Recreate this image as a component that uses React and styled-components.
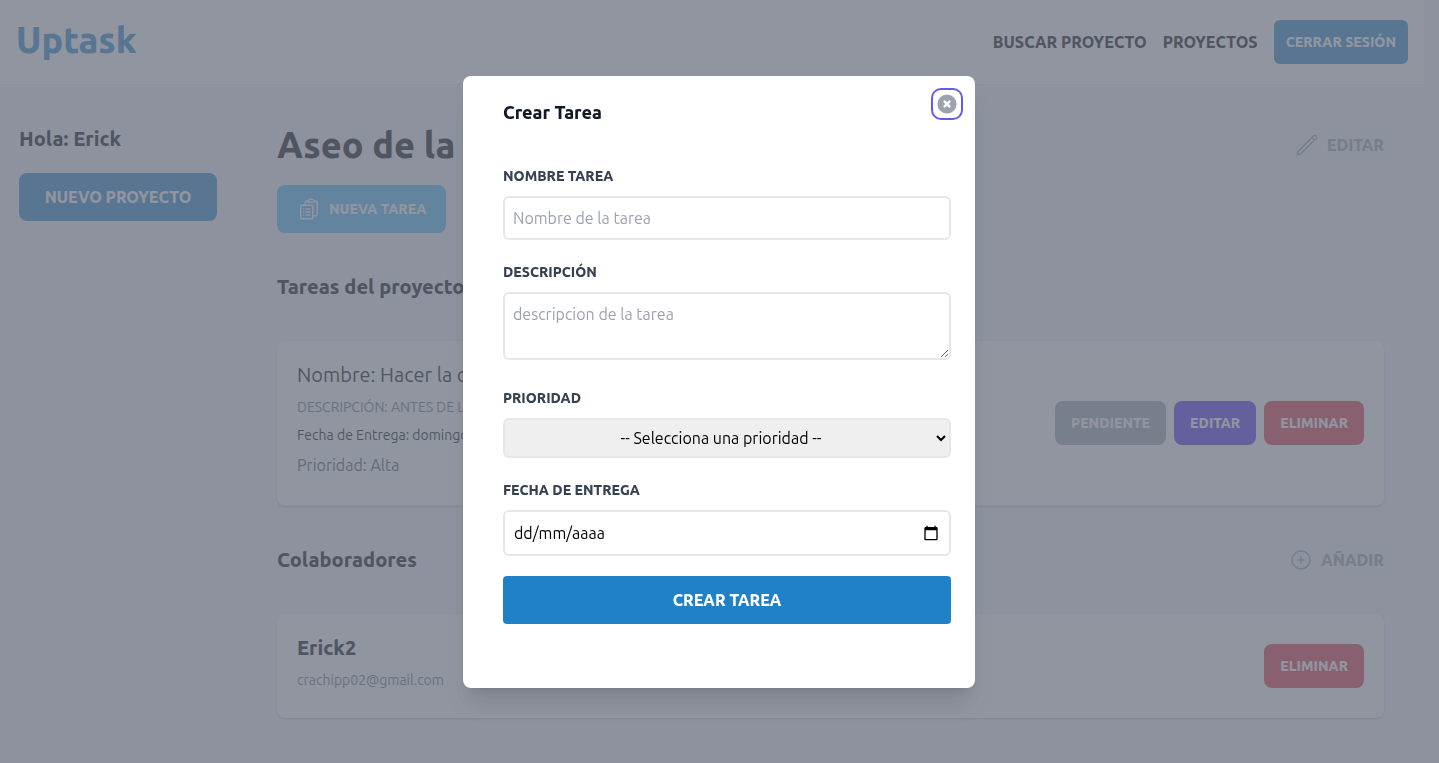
import React from "react";
import styled, { createGlobalStyle } from "styled-components";

const font = 'Ubuntu, "Noto Sans", "Open Sans", sans-serif';
const bold = 800;

const GlobalStyle = createGlobalStyle`
  *, *::before, *::after { box-sizing: border-box; }
  body {
    margin: 0;
    padding-right: 15px;
    background: #f3f4f6;
    color: #000;
    font-family: ${font};
    font-size: 16px;
    line-height: 24px;
  }
  h1, h2, p { margin: 0; }
  button, input, select, textarea { font-family: inherit; }
  a { color: inherit; text-decoration: none; }
`;

const Header = styled.header`
  display: flex;
  align-items: center;
  justify-content: space-between;
  padding: 20px 16px;
  background: #fff;
  border-bottom: 1px solid #e5e7eb;
`;

const Logo = styled.p`
  height: 44px;
  color: #2081c8;
  font-size: 36px;
  font-weight: ${bold};
  line-height: 40px;
`;

const Nav = styled.nav`
  display: flex;
  align-items: center;
  gap: 16px;
`;

const NavItem = styled.a`
  font-weight: ${bold};
  text-transform: uppercase;
`;

const NavButton = styled.button`
  padding: 0;
  border: 0;
  background: none;
  font-size: 16px;
  font-weight: ${bold};
  line-height: 24px;
  text-transform: uppercase;
  cursor: pointer;
`;

const tones = {
  primary: "#2081c8",
  sky: "#48baf6",
  gray: "#9ca3af",
  indigo: "#4f2ef4",
  red: "#e02f3f",
};

const Button = styled.button`
  display: flex;
  align-items: center;
  gap: 8px;
  padding: ${({ $padding }) => $padding || "12px 16px"};
  border: 0;
  border-radius: ${({ $radius }) => $radius || 8}px;
  background: ${({ $tone }) => tones[$tone]};
  color: #fff;
  font-size: 14px;
  font-weight: ${bold};
  line-height: 20px;
  text-transform: uppercase;
  cursor: pointer;
`;

const Layout = styled.div`
  display: flex;
`;

const Sidebar = styled.aside`
  flex: 0 0 237px;
  padding: 40px 20px 40px 19px;
`;

const Heading = styled.h2`
  font-size: 20px;
  font-weight: ${bold};
  line-height: 28px;
`;

const NewProject = styled.a`
  display: block;
  margin-top: 20px;
  padding: 12px;
  border-radius: 8px;
  background: #2081c8;
  color: #fff;
  font-weight: ${bold};
  text-align: center;
  text-transform: uppercase;
`;

const Main = styled.main`
  flex: 1;
  min-width: 0;
  padding: 40px;
`;

const SectionRow = styled.div`
  display: flex;
  align-items: center;
  justify-content: space-between;
`;

const TitleRow = styled(SectionRow)`
  margin-bottom: 20px;
`;

const Section = styled.section`
  display: grid;
  gap: 40px;
  margin-top: 40px;
`;

const Title = styled.h1`
  font-size: 36px;
  font-weight: ${bold};
  line-height: 40px;
`;

const IconLink = styled.a`
  display: flex;
  align-items: center;
  gap: 8px;
  color: #9ca3af;
  font-weight: ${bold};
  text-transform: uppercase;
`;

const Card = styled.article`
  display: flex;
  align-items: center;
  justify-content: space-between;
  padding: 20px;
  border-radius: 8px;
  background: #fff;
  box-shadow: 0 1px 3px rgba(0, 0, 0, 0.1), 0 1px 2px rgba(0, 0, 0, 0.1);
`;

const TaskCard = styled(Card)`
  border-bottom: 1px solid #e5e7eb;
`;

const CardText = styled.div`
  display: grid;
  gap: 8px;
  padding-bottom: 8px;
`;

const CardName = styled.p`
  font-size: 20px;
  font-weight: ${({ $bold }) => ($bold ? bold : 400)};
  line-height: 28px;
`;

const Small = styled.p`
  color: ${({ $muted }) => ($muted ? "#6b7280" : "#000")};
  font-size: 14px;
  line-height: 20px;
  text-transform: ${({ $upper }) => ($upper ? "uppercase" : "none")};
`;

const Priority = styled.p`
  color: #4b5563;
`;

const Actions = styled.div`
  display: flex;
  gap: 8px;
`;

const Overlay = styled.div`
  position: fixed;
  inset: 0;
  display: flex;
  align-items: center;
  justify-content: center;
  padding-right: 1px;
  background: rgba(107, 114, 128, 0.75);
`;

const Dialog = styled.div`
  position: relative;
  width: 100%;
  max-width: 512px;
  padding: 24px 24px 24px 40px;
  border-radius: 8px;
  background: #fff;
  box-shadow: 0 20px 25px -5px rgba(0, 0, 0, 0.1), 0 8px 10px -6px rgba(0, 0, 0, 0.1);
`;

const CloseButton = styled.button`
  position: absolute;
  top: 16px;
  right: 16px;
  display: flex;
  padding: 0;
  border: 0;
  border-radius: 6px;
  background: #fff;
  color: #9ca3af;
  box-shadow: 0 0 0 2px #fff, 0 0 0 4px #635bea;
  cursor: pointer;
`;

const DialogTitle = styled.h2`
  color: #111827;
  font-size: 18px;
  font-weight: ${bold};
  line-height: 24px;
`;

const Form = styled.form`
  display: grid;
  gap: 20px;
  margin: 40px 0;
`;

const Field = styled.div`
  display: grid;
  gap: 8px;
  padding-bottom: ${({ $extra }) => ($extra ? 6 : 0)}px;
`;

const Label = styled.label`
  color: #374151;
  font-size: 14px;
  font-weight: ${bold};
  text-transform: uppercase;
`;

const Input = styled.input`
  display: block;
  width: 100%;
  height: 44px;
  padding: 8px;
  border: 2px solid #e5e7eb;
  border-radius: 6px;
  background: #fff;
  color: #000;
  font-size: 16px;
  line-height: 24px;
  &::placeholder { color: #9ca3af; }
`;

const DateBox = styled.div`
  position: relative;
`;

const DateIcon = styled.svg`
  position: absolute;
  top: 15px;
  right: 12px;
  pointer-events: none;
`;

const DateInput = styled(Input)`
  height: 46px;
  padding: 8px 40px 8px 9px;
  &::placeholder { color: #000; }
`;

const Textarea = styled.textarea`
  display: block;
  width: 100%;
  height: 68px;
  padding: 8px;
  border: 2px solid #e5e7eb;
  border-radius: 6px;
  background: #fff;
  font-size: 16px;
  line-height: 24px;
  resize: vertical;
  &::placeholder { color: #9ca3af; }
`;

const Select = styled.select`
  width: 100%;
  height: 40px;
  padding: 0;
  border: 2px solid #e5e7eb;
  border-radius: 6px;
  background: #efefef;
  color: #000;
  font-size: 16px;
  text-align: center;
`;

const Submit = styled.button`
  height: 48px;
  border: 0;
  border-radius: 4px;
  background: #2081c8;
  color: #fff;
  font-size: 16px;
  font-weight: ${bold};
  text-transform: uppercase;
  cursor: pointer;
`;

const ClipboardIcon = () => (
  <svg width="24" height="24" viewBox="0 0 24 24" fill="none" stroke="currentColor" strokeWidth="1.5" strokeLinecap="round" strokeLinejoin="round" aria-hidden="true">
    <path d="M9 12h3.75M9 15h3.75M9 18h3.75m3 .75H18a2.25 2.25 0 002.25-2.25V6.108c0-1.135-.845-2.098-1.976-2.192a48.424 48.424 0 00-1.123-.08m-5.801 0c-.065.21-.1.433-.1.664 0 .414.336.75.75.75h4.5a.75.75 0 00.75-.75 2.25 2.25 0 00-.1-.664m-5.8 0A2.251 2.251 0 0113.5 2.25H15c1.012 0 1.867.668 2.15 1.586m-5.8 0c-.376.023-.75.05-1.124.08C9.095 4.01 8.25 4.973 8.25 6.108V8.25m0 0H4.875c-.621 0-1.125.504-1.125 1.125v11.25c0 .621.504 1.125 1.125 1.125h9.75c.621 0 1.125-.504 1.125-1.125V9.375c0-.621-.504-1.125-1.125-1.125H8.25zM6.75 12h.008v.008H6.75V12zm0 3h.008v.008H6.75V15zm0 3h.008v.008H6.75V18z" />
  </svg>
);

const PencilIcon = () => (
  <svg width="24" height="24" viewBox="0 0 24 24" fill="none" stroke="currentColor" strokeWidth="1.5" strokeLinecap="round" strokeLinejoin="round" aria-hidden="true">
    <path d="M16.862 4.487l1.687-1.688a1.875 1.875 0 112.652 2.652L6.832 19.82a4.5 4.5 0 01-1.897 1.13l-2.685.8.8-2.685a4.5 4.5 0 011.13-1.897L16.863 4.487zm0 0L19.5 7.125" />
  </svg>
);

const PlusIcon = () => (
  <svg width="24" height="24" viewBox="0 0 24 24" fill="none" stroke="currentColor" strokeWidth="1.5" strokeLinecap="round" strokeLinejoin="round" aria-hidden="true">
    <path d="M12 9v6m3-3H9m12 0a9 9 0 11-18 0 9 9 0 0118 0z" />
  </svg>
);

const CloseIcon = () => (
  <svg width="24" height="24" viewBox="0 0 20 20" fill="currentColor" aria-hidden="true">
    <path fillRule="evenodd" clipRule="evenodd" d="M10 18a8 8 0 100-16 8 8 0 000 16zM8.707 7.293a1 1 0 00-1.414 1.414L8.586 10l-1.293 1.293a1 1 0 101.414 1.414L10 11.414l1.293 1.293a1 1 0 001.414-1.414L11.414 10l1.293-1.293a1 1 0 00-1.414-1.414L10 8.586 8.707 7.293z" />
  </svg>
);

const CalendarIcon = () => (
  <DateIcon width="16" height="16" viewBox="0 0 24 24" fill="#000" aria-hidden="true">
    <path d="M20 3h-1V1h-2v2H7V1H5v2H4c-1.1 0-2 .9-2 2v16c0 1.1.9 2 2 2h16c1.1 0 2-.9 2-2V5c0-1.1-.9-2-2-2zm0 18H4V8h16v13z" />
  </DateIcon>
);

export default function App() {
  return (
    <>
      <GlobalStyle />
      <Header>
        <Logo>Uptask</Logo>
        <Nav>
          <NavButton type="button">Buscar Proyecto</NavButton>
          <NavItem href="#proyectos">Proyectos</NavItem>
          <Button type="button" $tone="primary" $padding="12px" $radius={6}>Cerrar Sesión</Button>
        </Nav>
      </Header>

      <Layout>
        <Sidebar>
          <Heading as="p">Hola: Erick</Heading>
          <NewProject href="#nuevo">Nuevo Proyecto</NewProject>
        </Sidebar>

        <Main>
          <TitleRow>
            <Title>Aseo de la habitación</Title>
            <IconLink href="#editar-proyecto">
              <PencilIcon />
              Editar
            </IconLink>
          </TitleRow>
          <Button type="button" $tone="sky" $padding="12px 20px">
            <ClipboardIcon />
            Nueva Tarea
          </Button>

          <Section>
            <Heading>Tareas del proyecto</Heading>
            <TaskCard>
              <CardText>
                <CardName>Nombre: Hacer la cama</CardName>
                <Small $muted $upper>Descripción: antes de las 10</Small>
                <Small>Fecha de Entrega: domingo</Small>
                <Priority>Prioridad: Alta</Priority>
              </CardText>
              <Actions>
                <Button type="button" $tone="gray">Pendiente</Button>
                <Button type="button" $tone="indigo">Editar</Button>
                <Button type="button" $tone="red">Eliminar</Button>
              </Actions>
            </TaskCard>
          </Section>

          <Section>
            <SectionRow>
              <Heading>Colaboradores</Heading>
              <IconLink href="#colaborador">
                <PlusIcon />
                Añadir
              </IconLink>
            </SectionRow>
            <Card>
              <CardText>
                <CardName $bold>Erick2</CardName>
                <Small $muted>crachipp02@gmail.com</Small>
              </CardText>
              <Button type="button" $tone="red">Eliminar</Button>
            </Card>
          </Section>
        </Main>
      </Layout>

      <Overlay>
        <Dialog role="dialog" aria-modal="true" aria-labelledby="dialog-title">
          <CloseButton type="button" aria-label="Cerrar">
            <CloseIcon />
          </CloseButton>
          <DialogTitle id="dialog-title">Crear Tarea</DialogTitle>
          <Form onSubmit={(e) => e.preventDefault()}>
            <Field>
              <Label htmlFor="nombre">Nombre Tarea</Label>
              <Input id="nombre" type="text" placeholder="Nombre de la tarea" />
            </Field>
            <Field $extra>
              <Label htmlFor="descripcion">Descripción</Label>
              <Textarea id="descripcion" placeholder="descripcion de la tarea" />
            </Field>
            <Field>
              <Label htmlFor="prioridad">Prioridad</Label>
              <Select id="prioridad" defaultValue="">
                <option value="">-- Selecciona una prioridad --</option>
                <option>Baja</option>
                <option>Media</option>
                <option>Alta</option>
              </Select>
            </Field>
            <Field>
              <Label htmlFor="fecha">Fecha de Entrega</Label>
              <DateBox>
                <DateInput id="fecha" type="text" inputMode="numeric" placeholder="dd/mm/aaaa" />
                <CalendarIcon />
              </DateBox>
            </Field>
            <Submit type="submit">Crear Tarea</Submit>
          </Form>
        </Dialog>
      </Overlay>
    </>
  );
}
